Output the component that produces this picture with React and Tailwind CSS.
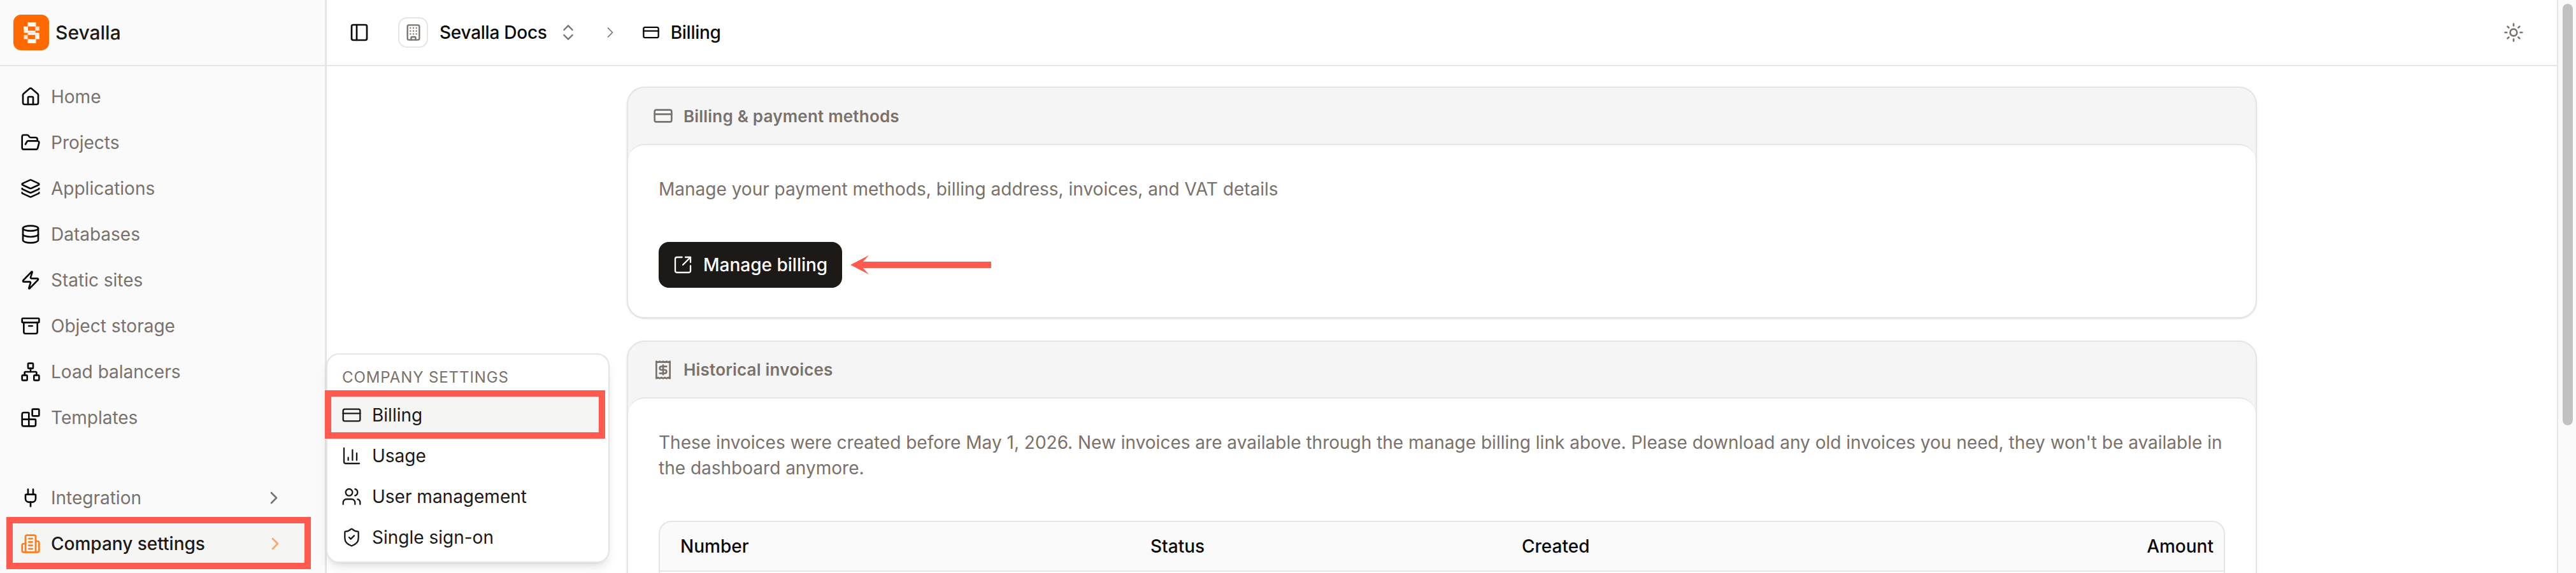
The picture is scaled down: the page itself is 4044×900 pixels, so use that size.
import React from "react";
import {
  Archive,
  Blocks,
  Building,
  ChartColumn,
  ChevronRight,
  ChevronsUpDown,
  CreditCard,
  Database,
  FolderOpen,
  House,
  Layers,
  Network,
  PanelLeft,
  Plug,
  Receipt,
  ShieldCheck,
  SquareArrowOutUpRight,
  Sun,
  Users,
  Zap,
} from "lucide-react";

const NAV_ITEMS = [
  { label: "Home", icon: House },
  { label: "Projects", icon: FolderOpen },
  { label: "Applications", icon: Layers },
  { label: "Databases", icon: Database },
  { label: "Static sites", icon: Zap },
  { label: "Object storage", icon: Archive },
  { label: "Load balancers", icon: Network },
  { label: "Templates", icon: Blocks },
];

const MENU_ITEMS = [
  { label: "Billing", icon: CreditCard, active: true },
  { label: "Usage", icon: ChartColumn },
  { label: "User management", icon: Users },
  { label: "Single sign-on", icon: ShieldCheck },
];

function SevallaMark() {
  return (
    <svg viewBox="0 0 25 33" className="w-[25px] h-[33px]" fill="#fff7f0">
      <rect x="6.5" y="0" width="13" height="6.6" />
      <rect x="0" y="6.6" width="7" height="6.6" />
      <rect x="18.5" y="6.6" width="6.5" height="6.6" opacity="0.85" />
      <rect x="0.5" y="13.2" width="18" height="3.3" />
      <rect x="6.5" y="16.5" width="18" height="3.3" />
      <rect x="0.5" y="19.8" width="6" height="6.6" opacity="0.85" />
      <rect x="18" y="19.8" width="7" height="6.6" />
      <rect x="6.5" y="26.4" width="13" height="6.6" />
    </svg>
  );
}

// lucide's building-2 has other inner lines, this one has the four in the picture
function CompanyIcon() {
  return (
    <svg viewBox="0 0 24 24" className="size-8 shrink-0" fill="none" stroke="#ff7d1a" strokeWidth="2" strokeLinecap="round" strokeLinejoin="round">
      <path d="M6 22V4a2 2 0 0 1 2-2h8a2 2 0 0 1 2 2v18Z" />
      <path d="M6 12H4a2 2 0 0 0-2 2v6a2 2 0 0 0 2 2h2" />
      <path d="M18 9h2a2 2 0 0 1 2 2v9a2 2 0 0 1-2 2h-2" />
      <path d="M10 6h4" />
      <path d="M10 10h4" />
      <path d="M10 14h4" />
      <path d="M10 18h4" />
    </svg>
  );
}

function Sidebar() {
  return (
    <aside className="w-[513px] shrink-0 flex flex-col bg-[#fafafa] border-r-[3px] border-stone-200">
      <div className="h-[104px] shrink-0 flex items-center gap-[10px] pl-[21px] border-b-2 border-stone-200">
        <div className="size-14 rounded-[12px] bg-[#ff6900] flex items-center justify-center">
          <SevallaMark />
        </div>
        <span className="text-[30px] font-medium text-stone-900">Sevalla</span>
      </div>
      <nav className="pt-3 flex flex-col flex-1">
        {NAV_ITEMS.map(({ label, icon: Icon }) => (
          <div key={label} className="h-[72px] flex items-center gap-4 pl-8 text-[28px] text-stone-500">
            <Icon className="size-8 text-stone-950 shrink-0" />
            <span>{label}</span>
          </div>
        ))}
      </nav>
      <div className="pb-[10px] flex flex-col">
        <div className="h-[72px] flex items-center gap-4 pl-8 pr-[64px] text-[28px] text-stone-500">
          <Plug className="size-8 text-stone-950 shrink-0" />
          <span className="flex-1">Integration</span>
          <ChevronRight className="size-8 text-stone-500 shrink-0" />
        </div>
        <div className="relative ml-5 mr-[32px] h-[72px] flex items-center gap-4 pl-3 pr-[30px] bg-stone-100 text-[28px] font-medium text-stone-900">
          <CompanyIcon />
          <span className="flex-1">Company settings</span>
          <ChevronRight className="size-8 text-[#ffa666] shrink-0" />
          <div className="absolute -left-[10px] -right-[10px] -top-[6px] -bottom-[4px] border-[10px] border-[#ff5a4f]" />
        </div>
      </div>
    </aside>
  );
}

function CompanyMenu() {
  return (
    <div className="absolute left-[512px] top-[555px] w-[445px] h-[329px] bg-white border-2 border-stone-200 rounded-[20px] shadow-lg">
      <div className="h-[54px] mt-[9px] flex items-center pl-[23px] text-[24px] tracking-[0.9px] text-stone-500">
        COMPANY SETTINGS
      </div>
      {MENU_ITEMS.map(({ label, icon: Icon, active }) => (
        <div
          key={label}
          className={
            active
              ? "relative ml-[6px] mr-[15px] h-16 flex items-center gap-4 pl-4 text-[28px] text-stone-900 bg-stone-100"
              : "relative ml-[6px] mr-[15px] h-16 flex items-center gap-4 pl-4 text-[28px] text-stone-900"
          }
        >
          <Icon className="size-8 shrink-0" strokeWidth={1.75} />
          <span>{label}</span>
          {active && <div className="absolute -left-[10px] -right-[10px] -top-[7px] -bottom-[5px] border-[10px] border-[#ff5a4f]" />}
        </div>
      ))}
    </div>
  );
}

function TopBar() {
  return (
    <header className="h-[104px] shrink-0 flex items-center justify-between pl-[35px] pr-[52px] border-b-2 border-stone-200">
      <div className="flex items-center text-[28px] font-medium tracking-[-0.25px] text-stone-950">
        <PanelLeft className="size-8 mr-[45px]" />
        <div className="w-[47px] h-[48px] rounded-[14px] border-2 border-stone-200 flex items-center justify-center mr-[18px]">
          <Building className="size-7 text-stone-500" />
        </div>
        <span>Sevalla Docs</span>
        <ChevronsUpDown className="size-8 ml-[17px] mr-[36px] text-stone-500" strokeWidth={1.75} />
        <ChevronRight className="size-7 mr-[36px] text-stone-500" strokeWidth={1.5} />
        <CreditCard className="size-7 mr-[17px]" />
        <span>Billing</span>
      </div>
      <Sun className="size-8 text-stone-500" />
    </header>
  );
}

function Card({ icon: Icon, title, headerHeight, children }) {
  return (
    <section className="rounded-[28px] border-2 border-stone-200 bg-[#f5f5f5] shadow-sm">
      <div className={headerHeight}>
        <div className="h-full flex items-center gap-4 pl-[39px] text-[26px] font-semibold text-stone-500 tracking-[0.2px]">
          <Icon className="size-8 shrink-0" />
          <span>{title}</span>
        </div>
      </div>
      <div className="bg-white rounded-[26px] border-t-2 border-stone-200 px-12 pt-[49px] text-[28px] leading-[40px] text-stone-500">
        {children}
      </div>
    </section>
  );
}

function MainContent() {
  return (
    <div className="flex-1 overflow-hidden pt-8">
      <div className="w-[2559px] mx-auto flex flex-col gap-[35px]">
        <Card icon={CreditCard} title="Billing & payment methods" headerHeight="h-[88px]">
          <p>Manage your payment methods, billing address, invoices, and VAT details</p>
          <div className="mt-[63px] pb-[46px] flex items-center gap-[13px]">
            <button className="w-[288px] h-[72px] rounded-[16px] bg-stone-900 text-white font-medium flex items-center gap-4 pl-[22px]">
              <SquareArrowOutUpRight className="size-8 shrink-0" strokeWidth={1.75} />
              Manage billing
            </button>
            <svg viewBox="0 0 221 30" className="w-[221px] h-[30px]" fill="#ff5a4f">
              <polygon points="0,15 29,0 20,10 221,10 221,20 20,20 29,30" />
            </svg>
          </div>
        </Card>
        <Card icon={Receipt} title="Historical invoices" headerHeight="h-[87px]">
          <p>
            These invoices were created before May 1, 2026. New invoices are available through the manage billing link
            above. Please download any old invoices you need, they won't be available in the dashboard anymore.
          </p>
          <div className="mt-[63px] rounded-[20px] border-2 border-stone-200 bg-[#fafafa] overflow-hidden">
            <div className="h-[78px] flex items-center pl-8 pr-4 border-b-2 border-stone-200 font-medium text-stone-950">
              <span className="w-[738px]">Number</span>
              <span className="w-[583px]">Status</span>
              <span className="flex-1">Created</span>
              <span>Amount</span>
            </div>
            {/* rows carry on below the fold */}
            <div className="h-[72px] bg-white" />
          </div>
        </Card>
      </div>
    </div>
  );
}

export default function App() {
  return (
    <div className="relative w-[4044px] h-[900px] flex overflow-hidden bg-white [font-family:Inter,sans-serif]">
      <Sidebar />
      <main className="flex-1 flex flex-col min-w-0">
        <TopBar />
        <MainContent />
      </main>
      <div className="w-[30px] shrink-0 bg-[#fafafa] border-l-2 border-stone-200 pt-[6px] pl-[7px]">
        <div className="w-4 h-[662px] rounded-full bg-[#c1c1c1]" />
      </div>
      <CompanyMenu />
    </div>
  );
}
